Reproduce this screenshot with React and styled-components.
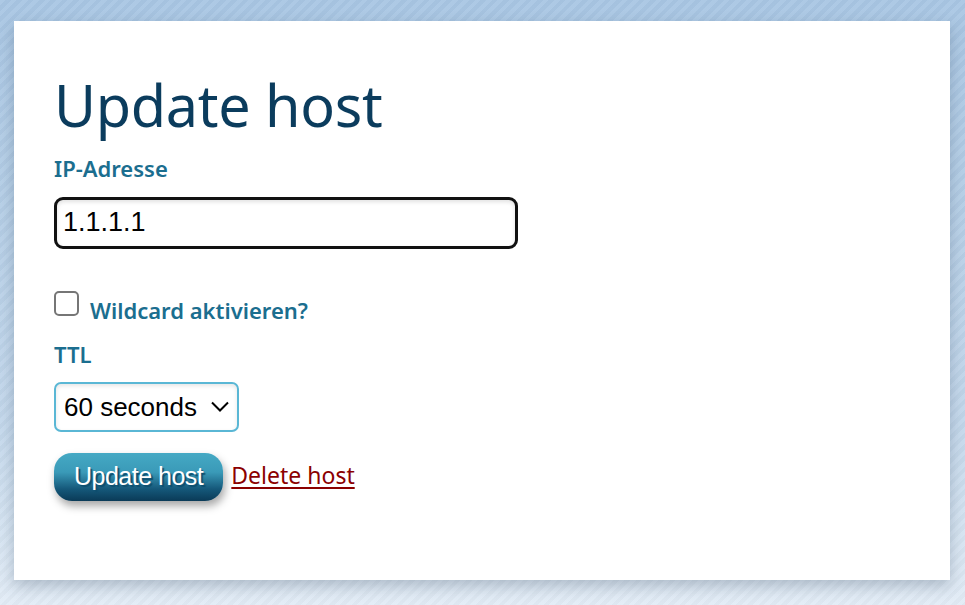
import React, { useState } from "react";
import styled, { createGlobalStyle } from "styled-components";

const GlobalStyle = createGlobalStyle`
  html, body {
    margin: 0;
    padding: 0;
  }
  body {
    font-family: "Noto Sans", "Open Sans", sans-serif;
    background-color: #b6cfe8;
    background-image:
      repeating-linear-gradient(135deg, rgba(255,255,255,0.06) 0 4px, rgba(0,0,0,0.02) 4px 8px),
      linear-gradient(180deg, #a8c6e3 0%, #c4d8ec 70%, #e2ecf6 100%);
    min-height: 605px;
  }
`;

const Page = styled.div`
  padding: 21px 15px 25px 14px;
`;

const Card = styled.main`
  background: #ffffff;
  height: 559px;
  box-sizing: border-box;
  padding: 56px 40px 0;
  box-shadow: 0 6px 14px rgba(60, 80, 100, 0.3);
`;

const Title = styled.h1`
  margin: 0;
  font-family: "Noto Sans", sans-serif;
  font-weight: 400;
  font-size: 57.5px;
  line-height: 1;
  color: #0b3c5d;
  letter-spacing: -0.3px;
`;

const Label = styled.label`
  display: block;
  font-family: "Noto Sans", sans-serif;
  font-weight: 600;
  font-size: 22px;
  line-height: 30px;
  color: #1b6e8f;
  margin-top: ${(p) => p.$top || 0}px;
`;

const TextInput = styled.input`
  display: block;
  box-sizing: border-box;
  width: 464px;
  height: 52px;
  margin-top: 14px;
  padding: 0 6px;
  border: 3px solid #111;
  border-radius: 9px;
  font-family: "Liberation Sans", Arial, sans-serif;
  font-size: 27px;
  color: #000;
  box-shadow: inset 0 2px 4px rgba(0, 0, 0, 0.12);
  outline: none;
`;

const CheckRow = styled.div`
  display: flex;
  align-items: center;
  gap: 11px;
  margin-top: 42px;
`;

const Check = styled.input`
  appearance: none;
  margin: 0;
  width: 25px;
  height: 25px;
  border: 2px solid #767676;
  border-radius: 5px;
  background: #fff;
  box-sizing: border-box;
  position: relative;
  top: -4px;

  &:checked {
    background: #1b6e8f;
    border-color: #1b6e8f;
  }
`;

const CheckLabel = styled.label`
  font-family: "Noto Sans", sans-serif;
  font-weight: 600;
  font-size: 22px;
  line-height: 30px;
  color: #1b6e8f;
  padding-top: 4px;
`;

const SelectWrap = styled.div`
  position: relative;
  width: 185px;
  margin-top: 13px;
`;

const Select = styled.select`
  display: block;
  appearance: none;
  box-sizing: border-box;
  height: 50px;
  width: 185px;
  padding: 0 30px 0 8px;
  border: 2px solid #5ab7d5;
  border-radius: 7px;
  background: #fff;
  font-family: "Liberation Sans", Arial, sans-serif;
  font-size: 26px;
  color: #000;
  box-shadow: inset 0 2px 4px rgba(0, 0, 0, 0.1);
  outline: none;
`;

const Chevron = styled.svg`
  position: absolute;
  right: 10px;
  top: 19px;
  width: 18px;
  height: 11px;
  pointer-events: none;
`;

const Actions = styled.div`
  display: flex;
  align-items: center;
  gap: 8px;
  margin-top: 21px;
`;

const Button = styled.button`
  height: 48px;
  padding: 0 20px;
  border: none;
  border-radius: 18px;
  background: linear-gradient(180deg, #45a9c4 0%, #3a9ab8 40%, #15587a 75%, #0a3a57 100%);
  color: #fff;
  font-family: "Liberation Sans", Arial, sans-serif;
  font-size: 25px;
  letter-spacing: -0.5px;
  text-shadow: 2px 2px 1px #0e4e6e;
  box-shadow: 2px 5px 8px rgba(0, 0, 0, 0.35);
  cursor: pointer;
`;

const DangerLink = styled.a`
  font-family: "Noto Sans", sans-serif;
  font-size: 23px;
  color: #8b0000;
  text-decoration: underline;
  text-underline-offset: 3px;
  padding-bottom: 4px;
`;

const App = () => {
  const [ip, setIp] = useState("1.1.1.1");
  const [wildcard, setWildcard] = useState(false);
  const [ttl, setTtl] = useState("60");

  return (
    <Page>
      <GlobalStyle />
      <Card>
        <Title>Update host</Title>
        <Label htmlFor="ip" $top={18}>IP-Adresse</Label>
        <TextInput id="ip" value={ip} onChange={(e) => setIp(e.target.value)} />
        <CheckRow>
          <Check
            id="wildcard"
            type="checkbox"
            checked={wildcard}
            onChange={(e) => setWildcard(e.target.checked)}
          />
          <CheckLabel htmlFor="wildcard">Wildcard aktivieren?</CheckLabel>
        </CheckRow>
        <Label htmlFor="ttl" $top={14}>TTL</Label>
        <SelectWrap>
          <Select id="ttl" value={ttl} onChange={(e) => setTtl(e.target.value)}>
            <option value="60">60 seconds</option>
            <option value="300">5 minutes</option>
            <option value="3600">1 hour</option>
          </Select>
          <Chevron viewBox="0 0 18 11" fill="none" stroke="#000" strokeWidth="2">
            <path d="M1 1.5 L9 9.5 L17 1.5" />
          </Chevron>
        </SelectWrap>
        <Actions>
          <Button type="button">Update host</Button>
          <DangerLink href="#">Delete host</DangerLink>
        </Actions>
      </Card>
    </Page>
  );
};

export default App;
